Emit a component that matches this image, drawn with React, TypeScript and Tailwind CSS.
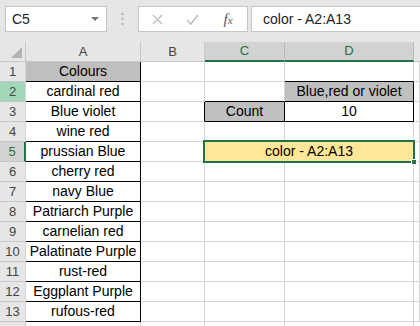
import React from 'react';

const rows = [
  'Colours',
  'cardinal red',
  'Blue violet',
  'wine red',
  'prussian Blue',
  'cherry red',
  'navy Blue',
  'Patriarch Purple',
  'carnelian red',
  'Palatinate Purple',
  'rust-red',
  'Eggplant Purple',
  'rufous-red',
];

const cell = 'h-[20px] shrink-0 flex items-center justify-center border-r border-b border-[#d4d4d4]';

function RowHeader({ n }: { n: number }) {
  let cls = 'bg-[#e6e6e6] text-[#444]';
  if (n === 2) cls = 'bg-[#a0d8b9] text-[#444]';
  if (n === 5) cls = 'bg-[#d2d2d2] text-[#217346] !border-r-2 !border-r-[#217346]';
  return (
    <div className={`${cell} w-[26px] text-[13px] ${cls} !border-b-[#c8c8c8]`}>{n}</div>
  );
}

function Row({ n, label }: { n: number; label: string }) {
  const aFill = n === 1 ? 'bg-[#bfbfbf]' : 'bg-white';
  const bRight = n === 3 ? '!border-r-black' : '';
  let cCls = 'bg-white';
  if (n === 3) cCls = 'bg-[#bfbfbf] !border-r-black !border-b-black';
  if (n === 2) cCls = 'bg-white !border-b-black';
  let dCls = 'bg-white';
  if (n === 1) dCls = 'bg-white !border-b-black';
  if (n === 2) dCls = 'bg-[#bfbfbf] !border-r-black !border-b-black';
  if (n === 3) dCls = 'bg-white !border-r-black !border-b-black';

  return (
    <div className="flex">
      <RowHeader n={n} />
      <div className={`${cell} w-[115px] ${aFill} !border-r-black !border-b-black`}>{label}</div>
      <div className={`${cell} w-[64px] bg-white ${bRight}`}></div>
      {n === 5 ? (
        <div className={`${cell} w-[209px] bg-[#ffe699] relative`}>
          color - A2:A13
          <div className="absolute left-[-2px] top-[-2px] right-[-2px] bottom-[-2px] border-2 border-[#217346]"></div>
          <div className="absolute right-[-4px] bottom-[-4px] w-[6px] h-[6px] bg-[#217346] border border-white"></div>
        </div>
      ) : (
        <>
          <div className={`${cell} w-[80px] ${cCls}`}>{n === 3 ? 'Count' : ''}</div>
          <div className={`${cell} w-[129px] ${dCls}`}>
            {n === 2 ? 'Blue,red or violet' : n === 3 ? '10' : ''}
          </div>
        </>
      )}
      <div className={`${cell} flex-1 bg-white`}></div>
    </div>
  );
}

export default function App() {
  return (
    <div
      className="w-[420px] h-[326px] overflow-hidden bg-white text-[14px] text-black"
      style={{ fontFamily: '"Liberation Sans", Arial, sans-serif' }}
    >
      {/* Formula bar */}
      <div className="h-[42px] bg-[#e6e6e6] flex items-start pt-[6px] pl-[5px]">
        <div className="w-[102px] h-[26px] bg-white border border-[#c6c6c6] flex items-center justify-between pl-[6px] pr-[7px]">
          <span className="text-[14px] text-[#222]">C5</span>
          <svg width="8" height="5" viewBox="0 0 8 5">
            <path d="M0 0 L8 0 L4 4 Z" fill="#777" />
          </svg>
        </div>
        <div className="w-[31px] h-[26px] flex items-center justify-center">
          <svg width="3" height="12" viewBox="0 0 3 12">
            <rect x="0.5" y="0" width="2" height="2" fill="#b0b0b0" />
            <rect x="0.5" y="5" width="2" height="2" fill="#b0b0b0" />
            <rect x="0.5" y="10" width="2" height="2" fill="#b0b0b0" />
          </svg>
        </div>
        <div className="w-[110px] h-[26px] bg-white border border-[#c6c6c6] flex items-center">
          <div className="w-[36px] flex justify-center">
            <svg width="11" height="11" viewBox="0 0 11 11">
              <path d="M1 1 L10 10 M10 1 L1 10" stroke="#bdbdbd" strokeWidth="1.3" />
            </svg>
          </div>
          <div className="w-[34px] flex justify-center">
            <svg width="13" height="11" viewBox="0 0 13 11">
              <path d="M1 6 L5 10 L12 1" stroke="#bdbdbd" strokeWidth="1.5" fill="none" />
            </svg>
          </div>
          <div className="flex-1 flex justify-center">
            <span
              className="italic text-[15px] text-[#555]"
              style={{ fontFamily: '"Liberation Serif", serif' }}
            >
              f<span className="text-[11px]">x</span>
            </span>
          </div>
        </div>
        <div className="ml-[3px] flex-1 h-[26px] bg-white border border-[#c6c6c6] border-r-0 flex items-center pl-[11px]">
          <span className="text-[14px] text-[#222]">color - A2:A13</span>
        </div>
      </div>

      {/* Column headers */}
      <div className="flex text-[13px] text-[#444]">
        <div className="w-[26px] h-[20px] bg-[#e6e6e6] border-r border-b border-[#c8c8c8] flex items-end justify-end p-[3px]">
          <svg width="11" height="11" viewBox="0 0 11 11">
            <path d="M11 0 L11 11 L0 11 Z" fill="#b4b4b4" />
          </svg>
        </div>
        <div className="w-[115px] h-[20px] bg-[#e6e6e6] border-r border-b border-[#c8c8c8] flex items-center justify-center">A</div>
        <div className="w-[64px] h-[20px] bg-[#e6e6e6] border-r border-b border-[#c8c8c8] flex items-center justify-center">B</div>
        <div className="w-[80px] h-[20px] bg-[#d2d2d2] border-r border-[#b8b8b8] border-b-2 border-b-[#217346] flex items-center justify-center text-[#217346]">C</div>
        <div className="w-[129px] h-[20px] bg-[#d2d2d2] border-r border-[#b8b8b8] border-b-2 border-b-[#217346] flex items-center justify-center text-[#217346]">D</div>
        <div className="flex-1 h-[20px] bg-[#e6e6e6] border-b border-[#c8c8c8]"></div>
      </div>

      {rows.map((label, i) => (
        <Row key={i} n={i + 1} label={label} />
      ))}
      <div className="flex">
        <div className="w-[26px] h-[20px] bg-[#e6e6e6] border-r border-[#c8c8c8]"></div>
        <div className="w-[115px] h-[20px] border-r border-[#d4d4d4]"></div>
        <div className="w-[64px] h-[20px] border-r border-[#d4d4d4]"></div>
        <div className="w-[80px] h-[20px] border-r border-[#d4d4d4]"></div>
        <div className="w-[129px] h-[20px] border-r border-[#d4d4d4]"></div>
      </div>
    </div>
  );
}
